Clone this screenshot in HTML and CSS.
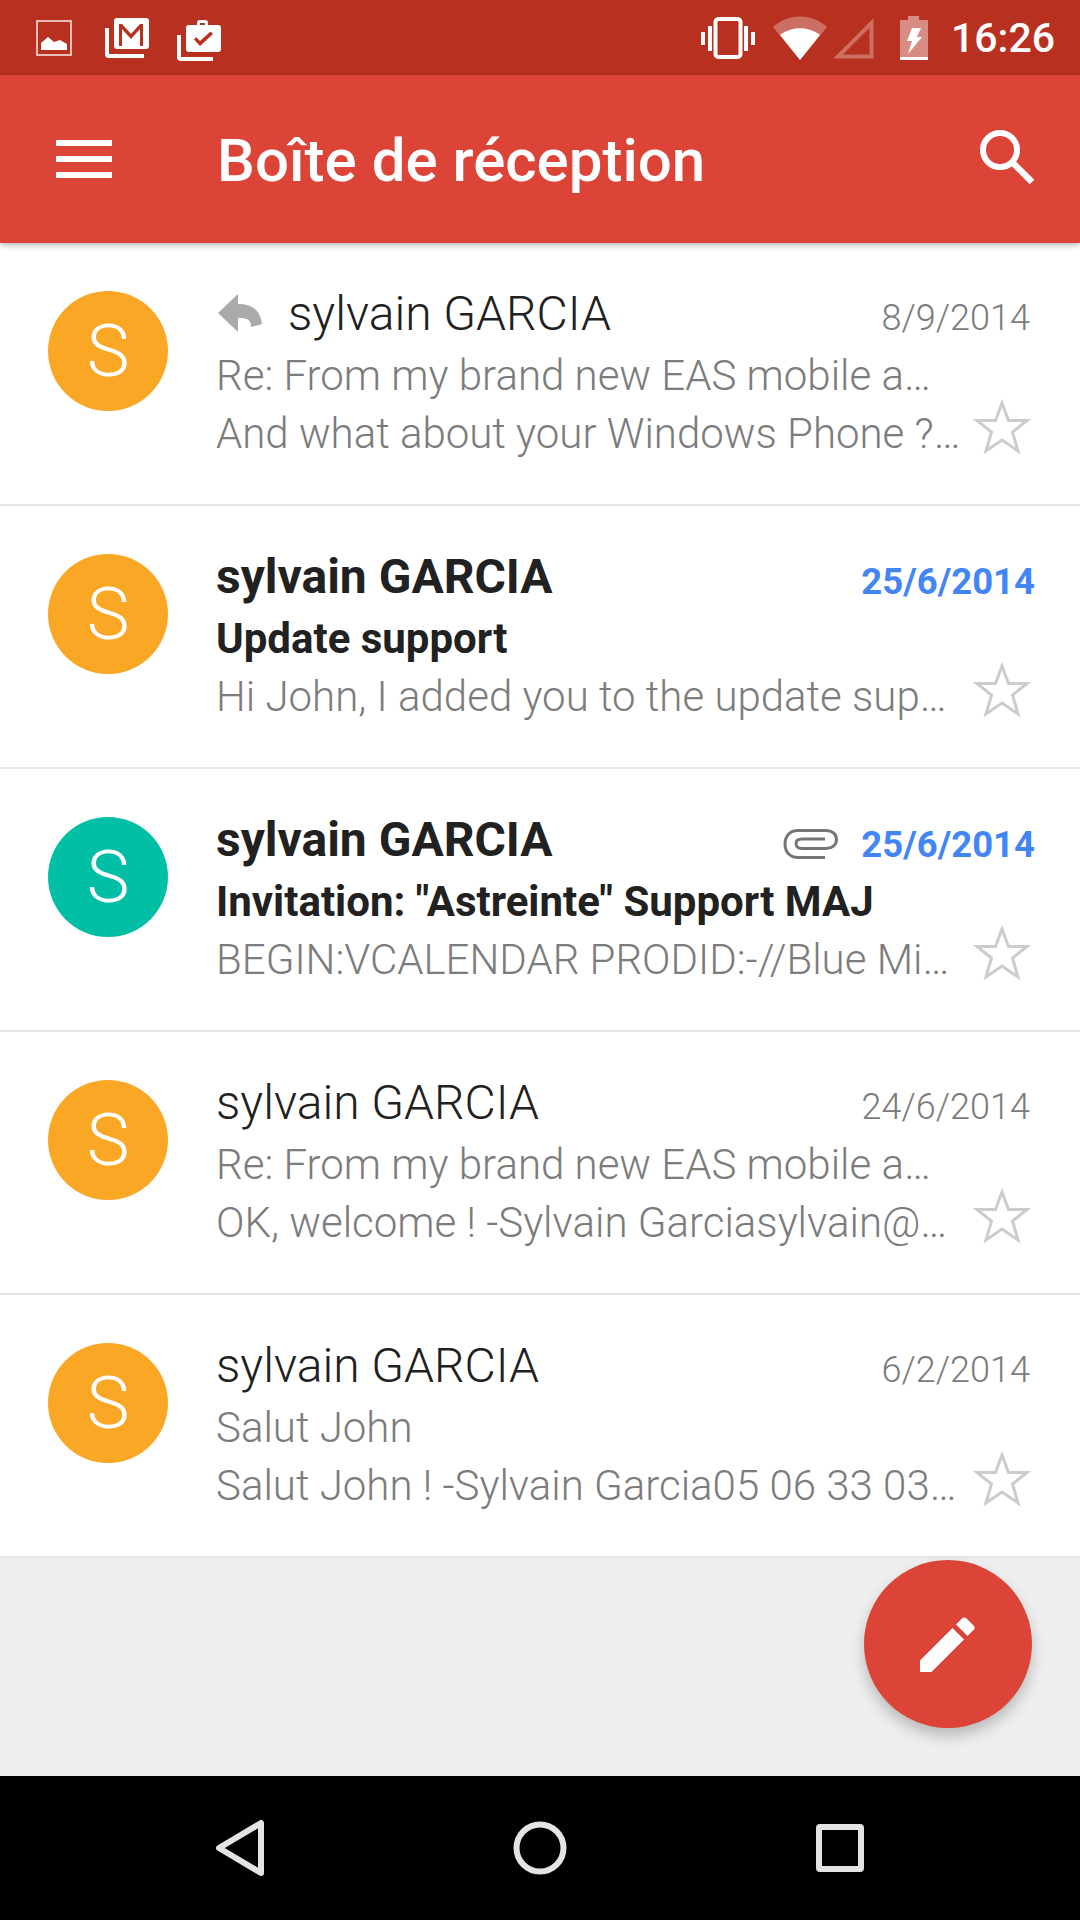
FILE: index.html
```html
<!DOCTYPE html>
<html lang="fr">
<head>
<meta charset="utf-8">
<title>Boîte de réception</title>
<link rel="stylesheet" href="styles.css">
</head>
<body>
<div class="screen">
  <div class="status">
    <div class="status-left">
      <svg class="ic-image" width="36" height="36" viewBox="0 0 36 36"><rect x="1" y="1" width="34" height="34" fill="none" stroke="#fff" stroke-opacity=".85" stroke-width="1.6"/><path d="M5 30V23L12 17L18 22L24 20L31 24V30Z" fill="#fff"/></svg>
      <svg class="ic-gmail" width="46" height="40" viewBox="0 0 46 40"><path d="M2 10V36a2 2 0 0 0 2 2H39" fill="none" stroke="#fff" stroke-width="4"/><path fill-rule="evenodd" d="M12 0H41a3 3 0 0 1 3 3V28a3 3 0 0 1-3 3H12a3 3 0 0 1-3-3V3a3 3 0 0 1 3-3ZM14 6V28H17V11L26 21L35 11V28H38V6H35L26 16L17 6Z" fill="#fff"/></svg>
      <svg class="ic-case" width="44" height="42" viewBox="0 0 44 42"><path d="M2 16V38a2 2 0 0 0 2 2H36" fill="none" stroke="#fff" stroke-width="4"/><path fill-rule="evenodd" d="M20 6V4a3 3 0 0 1 3-3h5a3 3 0 0 1 3 3V6H41a3 3 0 0 1 3 3V30a3 3 0 0 1-3 3H12a3 3 0 0 1-3-3V9a3 3 0 0 1 3-3ZM23 6H28V4H23ZM19 18L17 20.500L23 27L36 15L33.500 12.500L23 22Z" fill="#fff"/></svg>
    </div>
    <div class="status-right">
      <svg class="ic-vib" width="56" height="42" viewBox="0 0 56 42"><rect x="15.500" y="2" width="25" height="38" rx="3" fill="none" stroke="#fff" stroke-width="4"/><path d="M1 15h4v13H1ZM8 9h4v25H8ZM44 9h4v25h-4ZM51 15h4v13h-4Z" fill="#fff"/></svg>
      <svg class="ic-wifi" width="54" height="44" viewBox="0 0 54 44"><path d="M0 11C15-3 39-3 54 11L27 44Z" fill="#fff" fill-opacity=".3"/><path d="M7 19C18 10 36 10 47 19L27 44Z" fill="#fff"/></svg>
      <svg class="ic-signal" width="42" height="42" viewBox="0 0 42 42"><path d="M39.500 6V39.500H6Z" fill="none" stroke="#fff" stroke-opacity=".3" stroke-width="4"/></svg>
      <svg class="ic-batt" width="30" height="44" viewBox="0 0 30 44"><path d="M9 0H20V4H29V41H1V4H9Z" fill="#fff" fill-opacity=".45"/><path d="M1 41H29V44H1Z" fill="#fff"/><path d="M13 12H22L18 21H23L9 38L13 25H8Z" fill="#fff"/></svg>
      <span class="clock">16:26</span>
    </div>
  </div>
  <header class="toolbar">
    <div class="menu"><span></span><span></span><span></span></div>
    <h1 class="title">Boîte de réception</h1>
    <svg class="ic-search" width="58" height="58" viewBox="0 0 58 58"><circle cx="20" cy="20" r="17" fill="none" stroke="#fff" stroke-width="6"/><path d="M32 32L52 52" stroke="#fff" stroke-width="6.500" fill="none"/></svg>
  </header>
  <main class="list">
    <article class="row">
      <div class="avatar orange">S</div>
      <div class="body">
        <div class="line line-top">
          <svg class="ic-reply" width="44" height="38" viewBox="0 0 44 38"><path d="M20 0V10C33 10 42 15 44 30L33 33C33 25 29 24 20 24V38L0 19Z" fill="#aaa"/></svg>
          <span class="sender">sylvain GARCIA</span>
          <span class="date">8/9/2014</span>
        </div>
        <div class="line subject">Re: From my brand new EAS mobile a…</div>
        <div class="line line-bottom">
          <span class="snippet">And what about your Windows Phone ?…</span>
          <svg class="star" width="60" height="58" viewBox="0 0 60 58"><path d="M30 5L36.500 22.500H55L40.500 34L46 53L30 42L14 53L19.500 34L5 22.500H23.500Z" fill="none" stroke="#ccc" stroke-width="3"/></svg>
        </div>
      </div>
    </article>
    <article class="row unread">
      <div class="avatar orange">S</div>
      <div class="body">
        <div class="line line-top">
          <span class="sender">sylvain GARCIA</span>
          <span class="date">25/6/2014</span>
        </div>
        <div class="line subject">Update support</div>
        <div class="line line-bottom">
          <span class="snippet">Hi John, I added you to the update sup…</span>
          <svg class="star" width="60" height="58" viewBox="0 0 60 58"><path d="M30 5L36.500 22.500H55L40.500 34L46 53L30 42L14 53L19.500 34L5 22.500H23.500Z" fill="none" stroke="#ccc" stroke-width="3"/></svg>
        </div>
      </div>
    </article>
    <article class="row unread">
      <div class="avatar teal">S</div>
      <div class="body">
        <div class="line line-top">
          <span class="sender">sylvain GARCIA</span>
          <svg class="ic-clip" width="56" height="32" viewBox="0 0 56 32"><path d="M42 29.500H15C7 29.500 2 24 2 16S7 2.500 15 2.500H43C49 2.500 53.500 6 53.500 11.500S49 20.500 43 20.500H19C15 20.500 13 18.500 13 15.500S15 11 19 11H42" fill="none" stroke="#757575" stroke-width="3"/></svg>
          <span class="date">25/6/2014</span>
        </div>
        <div class="line subject">Invitation: "Astreinte" Support MAJ</div>
        <div class="line line-bottom">
          <span class="snippet">BEGIN:VCALENDAR PRODID:-//Blue Mi…</span>
          <svg class="star" width="60" height="58" viewBox="0 0 60 58"><path d="M30 5L36.500 22.500H55L40.500 34L46 53L30 42L14 53L19.500 34L5 22.500H23.500Z" fill="none" stroke="#ccc" stroke-width="3"/></svg>
        </div>
      </div>
    </article>
    <article class="row">
      <div class="avatar orange">S</div>
      <div class="body">
        <div class="line line-top">
          <span class="sender">sylvain GARCIA</span>
          <span class="date">24/6/2014</span>
        </div>
        <div class="line subject">Re: From my brand new EAS mobile a…</div>
        <div class="line line-bottom">
          <span class="snippet">OK, welcome ! -Sylvain Garciasylvain@…</span>
          <svg class="star" width="60" height="58" viewBox="0 0 60 58"><path d="M30 5L36.500 22.500H55L40.500 34L46 53L30 42L14 53L19.500 34L5 22.500H23.500Z" fill="none" stroke="#ccc" stroke-width="3"/></svg>
        </div>
      </div>
    </article>
    <article class="row">
      <div class="avatar orange">S</div>
      <div class="body">
        <div class="line line-top">
          <span class="sender">sylvain GARCIA</span>
          <span class="date">6/2/2014</span>
        </div>
        <div class="line subject">Salut John</div>
        <div class="line line-bottom">
          <span class="snippet">Salut John ! -Sylvain Garcia05 06 33 03…</span>
          <svg class="star" width="60" height="58" viewBox="0 0 60 58"><path d="M30 5L36.500 22.500H55L40.500 34L46 53L30 42L14 53L19.500 34L5 22.500H23.500Z" fill="none" stroke="#ccc" stroke-width="3"/></svg>
        </div>
      </div>
    </article>
  </main>
  <button class="fab" type="button" aria-label="Nouveau message">
    <svg width="56" height="56" viewBox="0 0 56 56"><path d="M0 44.500L32.500 12L44 23.500L11.500 56H0Z" fill="#fff"/><path d="M36 8.500L42 2.500C43.500 1 45 1 46.500 2.500L53.500 9.500C55 11 55 12.500 53.500 14L47.500 20Z" fill="#fff"/></svg>
  </button>
  <nav class="navbar">
    <div class="nav-item"><svg width="52" height="60" viewBox="0 0 52 60"><path d="M47 5V55L5 30Z" fill="none" stroke="#e4e4e4" stroke-width="6" stroke-linejoin="round"/></svg></div>
    <div class="nav-item"><svg width="54" height="54" viewBox="0 0 54 54"><circle cx="27" cy="27" r="23.500" fill="none" stroke="#e4e4e4" stroke-width="6"/></svg></div>
    <div class="nav-item"><svg width="48" height="48" viewBox="0 0 48 48"><rect x="3" y="3" width="42" height="42" rx="1" fill="none" stroke="#e4e4e4" stroke-width="6"/></svg></div>
  </nav>
</div>
</body>
</html>
```

FILE: styles.css
```css
* { box-sizing: border-box; }
html, body { margin: 0; padding: 0; }
body { font-family: Roboto, "Liberation Sans", sans-serif; background: #eeeeee; }
svg { display: block; flex: none; }

.screen {
  position: relative;
  width: 1080px;
  height: 1920px;
  display: flex;
  flex-direction: column;
  overflow: hidden;
  background: #eeeeee;
}

.status {
  height: 75px;
  background: #b8301f;
  display: flex;
  justify-content: space-between;
  align-items: center;
  padding: 0 25px 0 36px;
  flex: none;
}
.status-left, .status-right { display: flex; align-items: center; }
.ic-gmail { margin-left: 33px; }
.ic-case { margin-left: 26px; margin-top: 4px; }
.ic-wifi { margin-left: 17px; }
.ic-signal { margin-left: 5px; }
.ic-batt { margin-left: 25px; }
.clock {
  margin-left: 22px;
  color: #fff;
  font-size: 41px;
  font-weight: 500;
  line-height: 48px;
}

.toolbar {
  position: relative;
  z-index: 2;
  height: 168px;
  flex: none;
  background: #db4437;
  display: flex;
  align-items: center;
  padding: 0 42px 0 56px;
  box-shadow: 0 2px 6px rgba(0, 0, 0, .3);
}
.menu { width: 56px; display: flex; flex-direction: column; gap: 10px; }
.menu span { display: block; height: 6px; background: #fff; }
.title {
  flex: 1;
  margin: 4px 0 0 105px;
  color: #fff;
  font-size: 60px;
  font-weight: 500;
  line-height: 72px;
}

.list { flex: none; background: #fff; }
.row {
  height: 263px;
  padding: 48px 50px 0 48px;
  display: flex;
  border-bottom: 2px solid #e6e6e6;
}
.avatar {
  width: 120px;
  height: 120px;
  border-radius: 50%;
  flex: none;
  color: #fff;
  font-size: 72px;
  font-weight: 300;
  display: flex;
  align-items: center;
  justify-content: center;
}
.orange { background: #faa726; }
.teal { background: #00bfa5; }

.body { flex: 1; min-width: 0; margin-left: 48px; margin-top: -10px; }
.line { height: 60px; white-space: nowrap; display: flex; align-items: center; }
.line-top { height: 64px; }
.subject { font-size: 42px; font-weight: 300; color: #7c7c7c; }
.snippet { flex: 1; font-size: 42px; font-weight: 300; color: #7c7c7c; overflow: hidden; margin-top: -4px; }
.sender { flex: 1; font-size: 48px; font-weight: 300; color: #212121; }
.date { font-size: 36px; font-weight: 300; color: #7c7c7c; margin-top: 10px; }
.star { margin: -16px -2px 0 0; }
.ic-reply { margin: 0 26px 0 2px; }
.ic-clip { margin: 10px 22px 0 0; }

.unread .sender { font-weight: 700; }
.unread .subject { font-weight: 700; color: #212121; }
.unread .date { font-size: 36.500px; font-weight: 700; color: #4285f4; margin-right: -5px; }

.fab {
  position: absolute;
  left: 864px;
  top: 1560px;
  width: 168px;
  height: 168px;
  border: 0;
  padding: 0;
  border-radius: 50%;
  background: #db4437;
  box-shadow: 0 8px 14px rgba(0, 0, 0, .22);
  display: flex;
  align-items: center;
  justify-content: center;
}

.navbar {
  margin-top: auto;
  height: 144px;
  flex: none;
  background: #000;
  display: flex;
  justify-content: center;
  align-items: center;
}
.nav-item { width: 300px; display: flex; justify-content: center; }
```
